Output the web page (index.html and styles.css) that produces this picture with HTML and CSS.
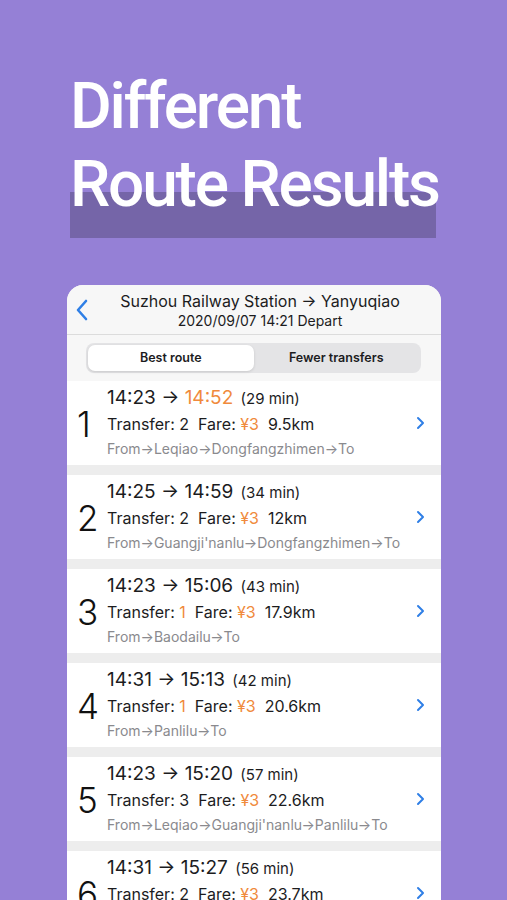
FILE: index.html
```html
<!DOCTYPE html>
<html lang="en">
<head>
    <meta charset="UTF-8">
    <meta name="viewport" content="width=device-width, initial-scale=1.0">
    <title>Different Route Results</title>
    <link rel="stylesheet" href="styles.css">
</head>
<body>

    <!-- Titular -->
    <header class="hero">
        <h1 class="hero-title">
            <span class="hero-line">Different</span>
            <span class="hero-line hero-mark">Route Results</span>
        </h1>
    </header>

    <!-- Pantalla del teléfono -->
    <div class="phone">
        <div class="topbar">
            <svg class="back" width="14" height="22" viewBox="0 0 14 22">
                <path d="M11 2 L3 11 L11 20" fill="none" stroke="#2f7fe6" stroke-width="2.6" stroke-linecap="round" stroke-linejoin="round"/>
            </svg>
            <div class="topbar-title">
                <div class="route-name">Suzhou Railway Station → Yanyuqiao</div>
                <div class="route-date">2020/09/07 14:21 Depart</div>
            </div>
        </div>

        <div class="tabs-wrap">
            <div class="tabs">
                <div class="tab active">Best route</div>
                <div class="tab">Fewer transfers</div>
            </div>
        </div>

        <ul class="results" id="results"></ul>
    </div>

    <script>
        // Datos de las rutas
        const routes = [
            { dep: '14:23', arr: '14:52', hot: true,  mins: 29, transfer: 2, km: '9.5',  path: 'From→Leqiao→Dongfangzhimen→To' },
            { dep: '14:25', arr: '14:59', hot: false, mins: 34, transfer: 2, km: '12',   path: "From→Guangji'nanlu→Dongfangzhimen→To" },
            { dep: '14:23', arr: '15:06', hot: false, mins: 43, transfer: 1, km: '17.9', path: 'From→Baodailu→To' },
            { dep: '14:31', arr: '15:13', hot: false, mins: 42, transfer: 1, km: '20.6', path: 'From→Panlilu→To' },
            { dep: '14:23', arr: '15:20', hot: false, mins: 57, transfer: 3, km: '22.6', path: "From→Leqiao→Guangji'nanlu→Panlilu→To" },
            { dep: '14:31', arr: '15:27', hot: false, mins: 56, transfer: 2, km: '23.7', path: 'From→Leqiao→Dongfangzhimen→To' }
        ];

        const list = document.getElementById('results');

        routes.forEach((r, i) => {
            const li = document.createElement('li');
            li.classList.add('result');
            const transferCls = r.transfer === 1 ? 'orange' : '';
            li.innerHTML = `
                <div class="num">${i + 1}</div>
                <div class="info">
                    <div class="times">${r.dep} → <span class="${r.hot ? 'orange' : ''}">${r.arr}</span> <span class="mins">(${r.mins} min)</span></div>
                    <div class="meta">Transfer: <span class="${transferCls}">${r.transfer}</span>&nbsp; Fare: <span class="orange">¥3</span>&nbsp; ${r.km}km</div>
                    <div class="path">${r.path}</div>
                </div>
                <svg class="chev" width="9" height="14" viewBox="0 0 9 14">
                    <path d="M2 2 L7 7 L2 12" fill="none" stroke="#2f7fe6" stroke-width="2" stroke-linecap="round" stroke-linejoin="round"/>
                </svg>
            `;
            list.appendChild(li);
        });
    </script>

</body>
</html>
```

FILE: styles.css
```css
body {
    margin: 0;
    padding: 0;
    background: #9580d6;
    font-family: 'Inter', 'Liberation Sans', sans-serif;
    color: #1c1c1e;
    height: 900px;
    overflow: hidden;
}

/* TITULAR */
.hero {
    padding: 68px 0 0 70px;
}

.hero-title {
    margin: 0;
    font-family: 'Roboto', sans-serif;
    font-weight: 500;
    font-size: 64px;
    line-height: 78px;
    letter-spacing: -2.2px;
    white-space: nowrap;
    color: #fff;
}

.hero-line {
    display: block;
}

.hero-mark {
    display: block;
    width: 366px;
    padding-bottom: 14px;
    background: linear-gradient(to bottom, transparent 0, transparent 46px, #7565a8 46px, #7565a8 100%);
}

/* TELÉFONO */
.phone {
    margin: 47px 0 0 67px;
    width: 374px;
    background: #ededed;
    border-radius: 16px 16px 0 0;
    overflow: hidden;
}

.topbar {
    display: flex;
    align-items: center;
    background: #f7f7f7;
    padding: 7px 0 4px;
    border-bottom: 1px solid #dcdcdc;
    position: relative;
}

.back {
    position: absolute;
    left: 8px;
    top: 14px;
}

.topbar-title {
    flex: 1;
    text-align: center;
    padding-left: 12px;
}

.route-name {
    font-size: 16px;
    line-height: 19px;
}

.route-date {
    font-size: 14px;
    line-height: 19px;
}

.tabs-wrap {
    background: #f7f7f7;
    padding: 8px 20px 8px 19px;
}

.tabs {
    display: flex;
    background: #e4e4e6;
    border-radius: 8px;
    padding: 2px;
}

.tab {
    flex: 1;
    text-align: center;
    font-size: 12.5px;
    font-weight: 600;
    line-height: 26px;
    color: #1c1c1e;
}

.tab.active {
    background: #fff;
    border-radius: 7px;
    box-shadow: 0 1px 3px rgba(0, 0, 0, 0.12);
}

.results {
    list-style: none;
    margin: 0;
    padding: 0;
}

.result {
    display: flex;
    align-items: center;
    background: #fff;
    height: 84px;
    margin-bottom: 10px;
    padding: 0 0 0 10px;
}

.num {
    width: 30px;
    font-size: 35px;
    font-weight: 300;
    color: #111;
    padding-top: 2px;
}

.info {
    flex: 1;
}

.times {
    font-size: 19px;
    line-height: 25px;
}

.mins {
    font-size: 15px;
    margin-left: 2px;
}

.meta {
    font-size: 16px;
    line-height: 26px;
}

.path {
    font-size: 14px;
    line-height: 24px;
    color: #8a8a8e;
}

.orange {
    color: #f08a3c;
}

.chev {
    margin-right: 16px;
}
```
